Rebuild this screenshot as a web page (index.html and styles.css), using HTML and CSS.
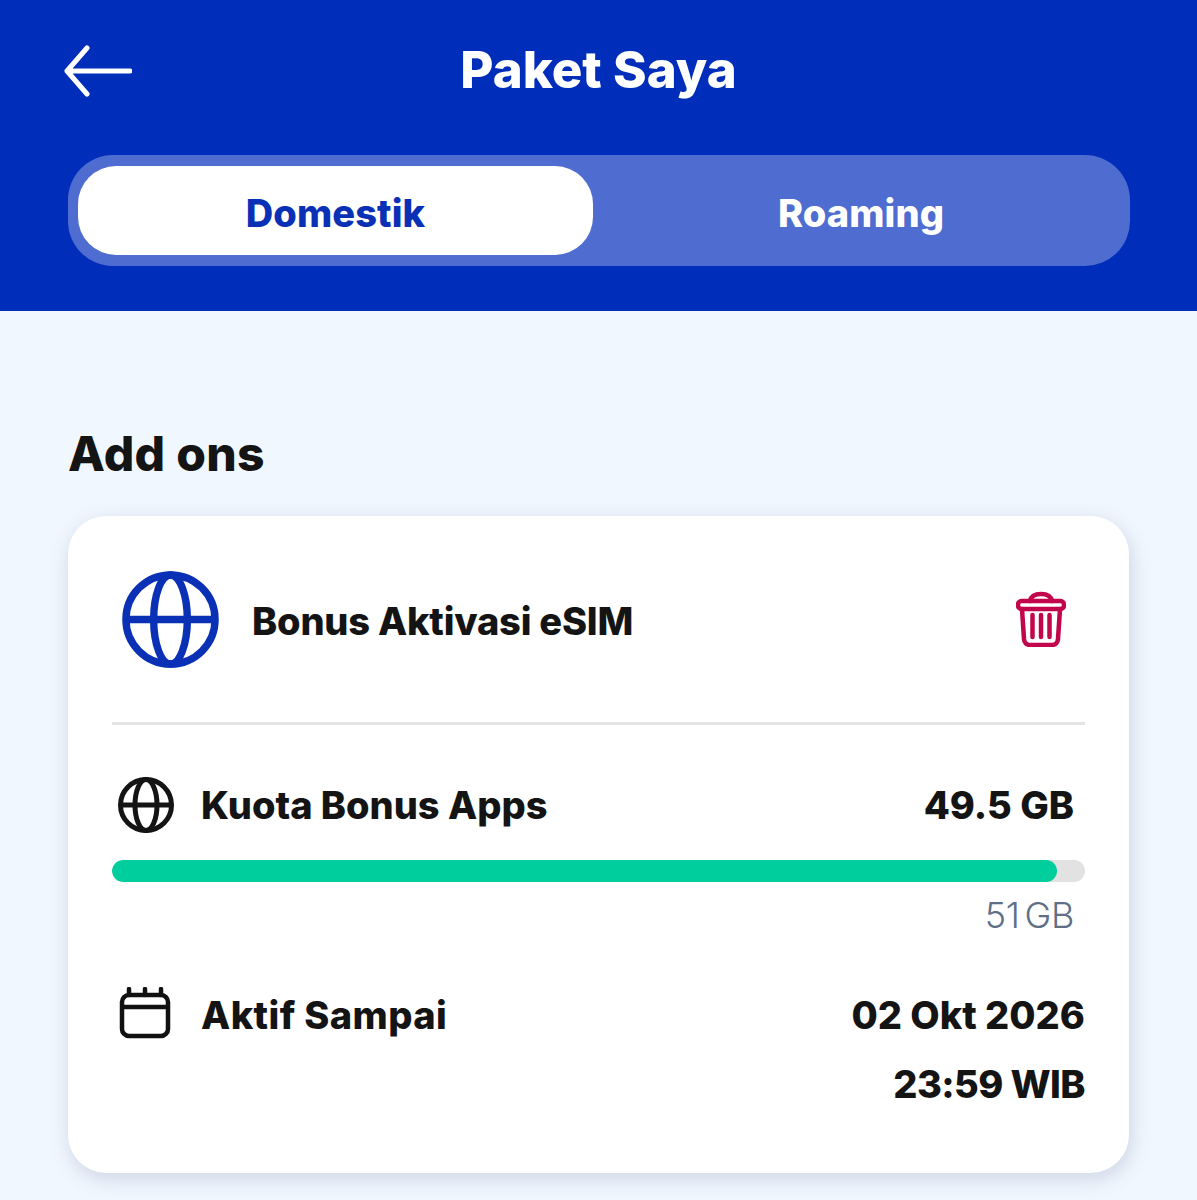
FILE: index.html
```html
<!DOCTYPE html>
<html lang="id">
<head>
<meta charset="utf-8">
<title>Paket Saya</title>
<link rel="stylesheet" href="styles.css">
</head>
<body>
<header class="header">
  <div class="titlebar">
    <svg class="back" viewBox="0 0 68 52" fill="none" stroke="#fff" stroke-width="5" stroke-linecap="round" stroke-linejoin="round"><path d="M66 26H3M23 3 3 26l20 23"/></svg>
    <h1 class="title">Paket Saya</h1>
  </div>
  <div class="tabs">
    <div class="tab tab-active">Domestik</div>
    <div class="tab">Roaming</div>
  </div>
</header>
<main class="content">
  <h2 class="section">Add ons</h2>
  <section class="card">
    <div class="card-head">
      <svg class="globe-lg" viewBox="0 0 100 100" fill="none" stroke="#0a31b5" stroke-width="7.500"><circle cx="50" cy="50" r="45"/><ellipse cx="50" cy="50" rx="17" ry="45"/><path d="M4 50h92"/></svg>
      <div class="card-name">Bonus Aktivasi eSIM</div>
      <svg class="trash" viewBox="0 0 50 56" fill="none" stroke="#c2064c" stroke-width="4.500" stroke-linecap="round" stroke-linejoin="round"><path d="M14 10c1-5 5-7 11-7s10 2 11 7"/><rect x="2" y="10" width="46" height="8" rx="3.500"/><path d="M6 18l2 30c.2 3.500 2.500 6 6 6h22c3.500 0 5.800-2.500 6-6l2-30"/><path d="M16.500 24v22M25 24v22M33.500 24v22"/></svg>
    </div>
    <div class="divider"></div>
    <div class="row quota-row">
      <svg class="globe-sm" viewBox="0 0 58 58" fill="none" stroke="#141414" stroke-width="5"><circle cx="29" cy="29" r="25.500"/><ellipse cx="29" cy="29" rx="11" ry="25.500"/><path d="M3 29h52"/></svg>
      <div class="row-label">Kuota Bonus Apps</div>
      <div class="row-value quota-value">49.5 GB</div>
    </div>
    <div class="bar"><div class="bar-fill" style="width:97.1%"></div></div>
    <div class="bar-total">51 GB</div>
    <div class="row date-row">
      <svg class="cal" viewBox="0 0 52 52" fill="none" stroke="#111" stroke-width="4.500" stroke-linecap="round" stroke-linejoin="round"><rect x="3" y="8" width="46" height="41" rx="7"/><path d="M3 20h46" stroke-linecap="butt"/><path d="M10 2v6M26 2v6M42 2v6"/></svg>
      <div class="row-label date-label">Aktif Sampai</div>
      <div class="date-value">
        <div class="row-value">02 Okt 2026</div>
        <div class="row-value time-value">23:59 WIB</div>
      </div>
    </div>
  </section>
</main>
</body>
</html>
```

FILE: styles.css
```css
* { box-sizing: border-box; }
html, body { margin: 0; padding: 0; }
body {
  height: 1200px;
  overflow: hidden;
  background: #f1f7fe;
  font-family: Inter, "Liberation Sans", sans-serif;
  color: #141414;
}
.header {
  height: 311px;
  background: #002dba;
  padding: 0 68px;
}
.titlebar {
  height: 155px;
  position: relative;
  display: flex;
  justify-content: center;
  padding-top: 41px;
}
.back {
  position: absolute;
  left: -4px;
  top: 45px;
  width: 68px;
  height: 52px;
}
.title {
  margin: 0;
  color: #fff;
  font-size: 51px;
  line-height: 58px;
  font-weight: 800;
}
.tabs {
  height: 111px;
  width: 1062px;
  border-radius: 45px;
  background: #4f6dd0;
  padding: 11px 10px;
  display: flex;
}
.tab {
  flex: 0 0 515px;
  height: 89px;
  border-radius: 38px;
  display: flex;
  align-items: center;
  justify-content: center;
  font-size: 38px;
  font-weight: 800;
  letter-spacing: 0.1px;
  color: #fff;
  padding-top: 4px;
}
.tab + .tab { flex: 1; padding-left: 9px; }
.tab-active {
  background: #fff;
  color: #0a31b5;
}
.content {
  padding: 113px 68px 0;
}
.section {
  margin: 0 0 32px;
  font-size: 48px;
  line-height: 60px;
  font-weight: 800;
  letter-spacing: 0.3px;
}
.card {
  height: 657px;
  background: #fff;
  border-radius: 38px;
  box-shadow: 2px 6px 20px rgba(60, 80, 130, 0.2);
  padding: 0 44px;
}
.card-head {
  display: flex;
  align-items: center;
  height: 206px;
  padding: 0 19px 0 9px;
}
.globe-lg { width: 99px; height: 99px; flex: none; filter: blur(0.6px); }
.card-name {
  margin-left: 32px;
  padding-top: 3px;
  flex: 1;
  font-size: 38px;
  font-weight: 800;
  letter-spacing: -0.2px;
}
.trash { width: 50px; height: 56px; flex: none; filter: blur(0.4px); }
.divider { height: 3px; background: #e5e5e5; }
.row { display: flex; }
.quota-row {
  align-items: center;
  height: 58px;
  margin-top: 51px;
  padding: 0 11px 0 5px;
}
.globe-sm { width: 58px; height: 58px; flex: none; filter: blur(0.6px); }
.row-label {
  margin-left: 26px;
  flex: 1;
  font-size: 38px;
  font-weight: 800;
}
.row-value {
  font-size: 38px;
  line-height: 69px;
  font-weight: 800;
  text-align: right;
}
.time-value { letter-spacing: -0.6px; }
.bar {
  margin-top: 26px;
  height: 22px;
  border-radius: 11px;
  background: #e2e2e2;
  overflow: hidden;
}
.bar-fill {
  height: 100%;
  border-radius: 11px;
  background: #00cf9d;
}
.bar-total {
  margin-top: 13px;
  padding-right: 11px;
  text-align: right;
  font-size: 36px;
  line-height: 40px;
  font-weight: 300;
  color: #5f6f86;
  letter-spacing: -0.3px;
  word-spacing: -5px;
}
.date-row {
  margin-top: 46px;
  padding-left: 7px;
}
.cal { width: 52px; height: 52px; flex: none; margin-top: 6px; }
.date-label { margin-left: 30px; line-height: 69px; letter-spacing: 0.4px; }
```
